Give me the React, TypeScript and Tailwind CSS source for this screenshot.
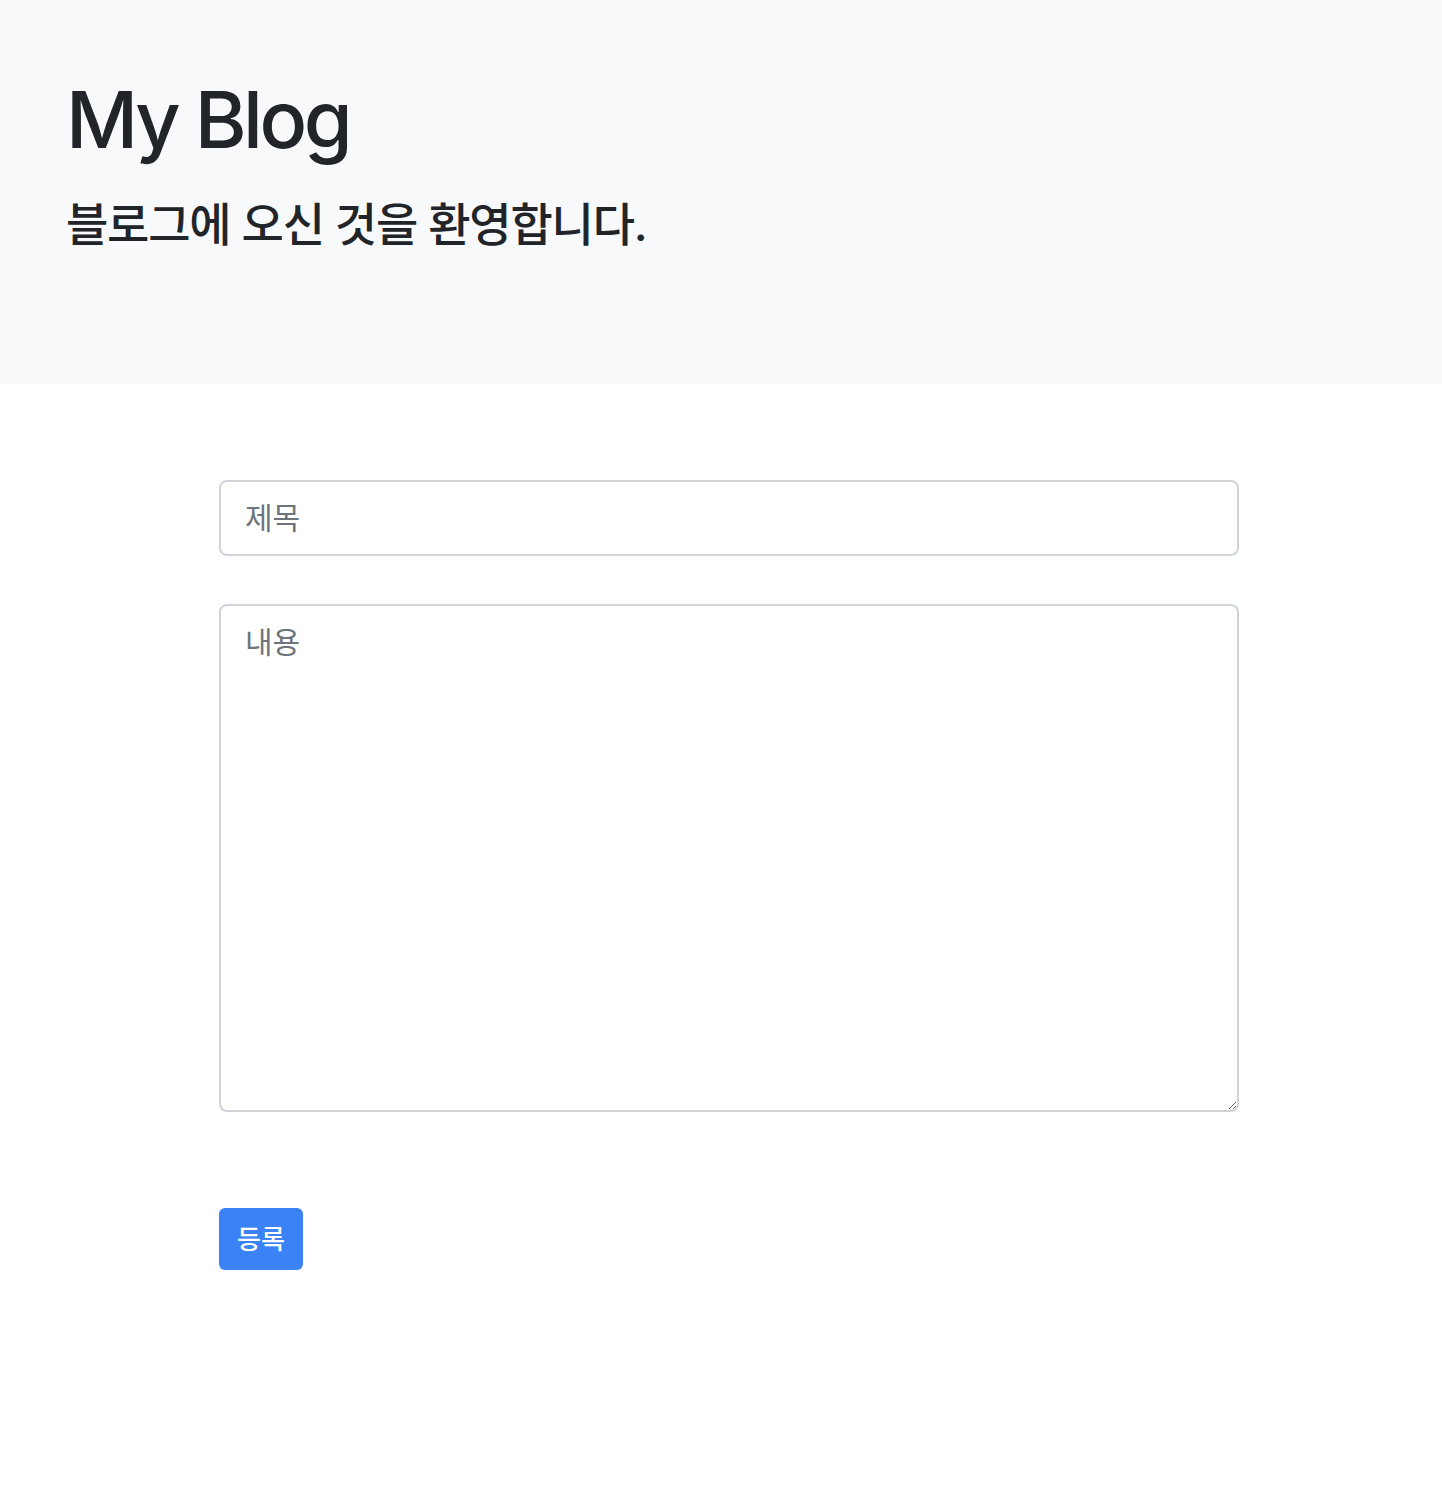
export default function App() {
  const font = { fontFamily: 'Inter, "Noto Sans CJK KR", sans-serif' };
  return (
    <div className="min-h-[1502px] bg-white text-[#212529]" style={font}>
      <header className="h-[384px] bg-[#f8f9fa] px-[66px] pt-[72px]">
        <h1 className="text-[79px] leading-[1.2] font-medium tracking-[-3.5px]">My Blog</h1>
        <p className="mt-[30px] text-[46px] leading-[1.2] font-medium tracking-[-1.2px]">블로그에 오신 것을 환영합니다.</p>
      </header>
      <main className="ml-[219px] w-[1020px] pt-[96px]">
        <input
          type="text"
          placeholder="제목"
          className="block h-[76px] w-full rounded-[8px] border-2 border-[#ced4da] bg-white px-[24px] text-[30px] text-[#212529] placeholder:text-[#6c757d] outline-none"
        />
        <textarea
          placeholder="내용"
          className="mt-[48px] block h-[508px] w-full rounded-[8px] border-2 border-[#ced4da] bg-white px-[24px] py-[12px] text-[30px] leading-[48px] text-[#212529] placeholder:text-[#6c757d] outline-none"
        />
        <button className="mt-[96px] h-[62px] w-[84px] rounded-[6px] bg-[#3b82f6] text-[26px] font-medium text-white">
          등록
        </button>
      </main>
    </div>
  );
}
